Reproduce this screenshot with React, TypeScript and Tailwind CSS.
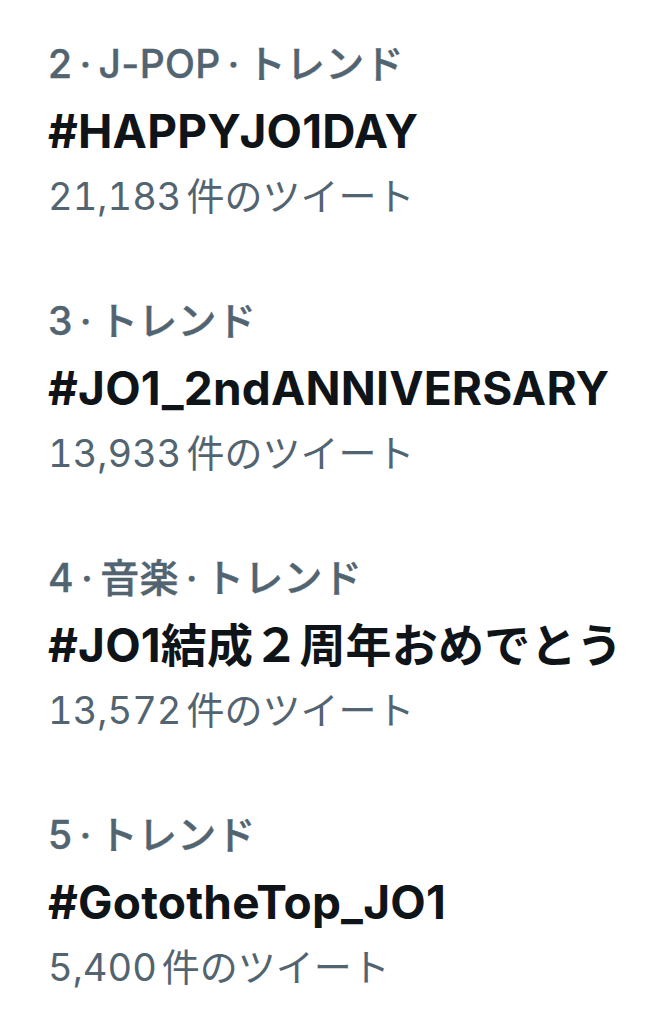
import React from 'react';

const trends = [
  { category: '2\u2009·\u2009J-POP\u2009·\u2009トレンド', name: '#HAPPYJO1DAY', count: '21,183', unit: '件のツイート' },
  { category: '3\u2009·\u2009トレンド', name: '#JO1_2ndANNIVERSARY', count: '13,933', unit: '件のツイート' },
  { category: '4\u2009·\u2009音楽\u2009·\u2009トレンド', name: '#JO1結成２周年おめでとう', count: '13,572', unit: '件のツイート' },
  { category: '5\u2009·\u2009トレンド', name: '#GototheTop_JO1', count: '5,400', unit: '件のツイート' },
];

const font = { fontFamily: 'Inter, "Noto Sans CJK JP", sans-serif' };

export default function App() {
  return (
    <div className="w-[668px] h-[1030px] bg-white overflow-hidden" style={font}>
      <div className="flex flex-col px-[48px]">
        {trends.map((t, i) => (
          <div key={i} className="py-[31px]">
            <div className="h-[65px] leading-[65px] text-[39px] font-medium text-[#536471] whitespace-nowrap tracking-[0.3px] [-webkit-text-stroke:0.4px_#536471]">
              {t.category}
            </div>
            <div className="h-[71px] leading-[71px] text-[46px] font-bold text-[#0f1419] whitespace-nowrap tracking-[0.2px]">
              {t.name}
            </div>
            <div className="h-[59px] leading-[59px] text-[38px] text-[#536471] whitespace-nowrap">
              <span className="tabular-nums">{t.count}</span>
              <span className="ml-[5px]">{t.unit}</span>
            </div>
          </div>
        ))}
      </div>
    </div>
  );
}
